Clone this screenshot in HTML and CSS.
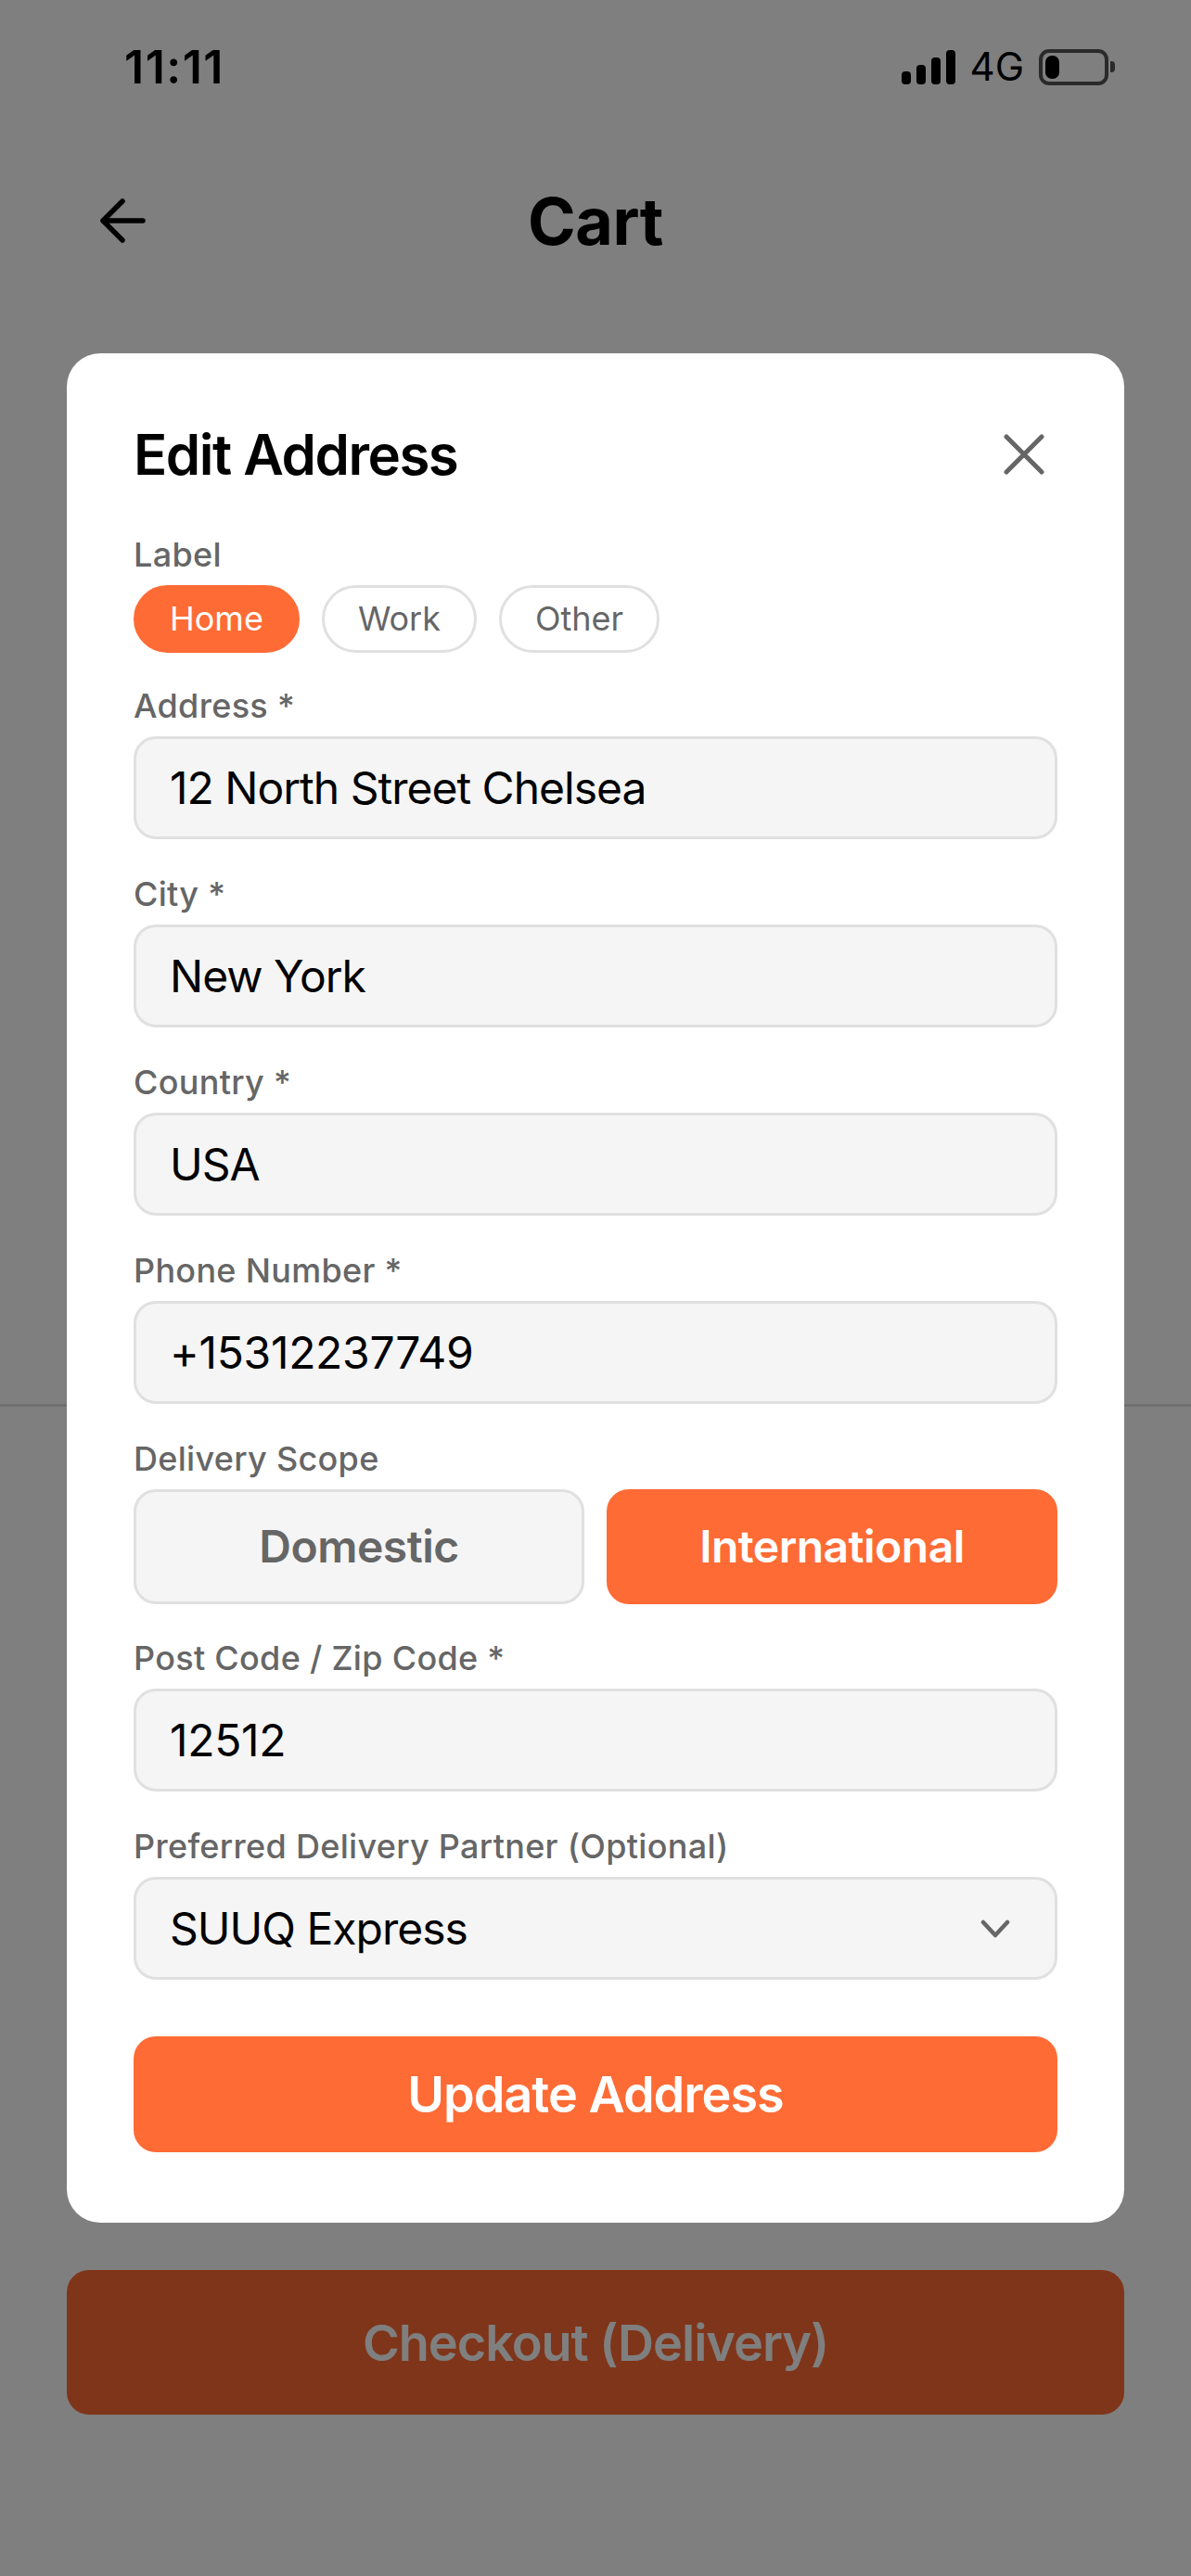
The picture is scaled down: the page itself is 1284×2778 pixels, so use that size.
FILE: index.html
```html
<!DOCTYPE html>
<html lang="en">

<head>
    <meta charset="UTF-8">
    <meta name="viewport" content="width=device-width, initial-scale=1.0">
    <title>Cart</title>
    <link rel="stylesheet" href="styles.css">
</head>

<body>

    <div class="screen">
        <div class="status-bar">
            <span class="time">11:11</span>
            <div class="status-icons">
                <div class="signal">
                    <span class="bar bar-1"></span>
                    <span class="bar bar-2"></span>
                    <span class="bar bar-3"></span>
                    <span class="bar bar-4"></span>
                </div>
                <span class="network">4G</span>
                <div class="battery">
                    <span class="battery-level"></span>
                </div>
                <span class="battery-cap"></span>
            </div>
        </div>

        <div class="cart-header">
            <svg class="back-icon" viewBox="0 0 52 52" fill="none" stroke="#000" stroke-width="5.5" stroke-linecap="round" stroke-linejoin="round">
                <path d="M48 26H5M26 5 5 26l21 21" />
            </svg>
            <h1>Cart</h1>
        </div>

        <div class="cart-footer">
            <button type="button" class="checkout-button">Checkout (Delivery)</button>
        </div>

        <!-- Address dialog -->
        <div class="overlay">
            <div class="modal">
                <div class="modal-header">
                    <h2>Edit Address</h2>
                    <svg class="close-icon" viewBox="0 0 46 46" fill="none" stroke="#666" stroke-width="5" stroke-linecap="round">
                        <path d="M4 4l38 38M42 4 4 42" />
                    </svg>
                </div>

                <div class="field-label">Label</div>
                <div class="chips">
                    <span class="chip active">Home</span>
                    <span class="chip">Work</span>
                    <span class="chip">Other</span>
                </div>

                <div class="field-label">Address *</div>
                <div class="input">12 North Street Chelsea</div>

                <div class="field-label">City *</div>
                <div class="input">New York</div>

                <div class="field-label">Country *</div>
                <div class="input">USA</div>

                <div class="field-label">Phone Number *</div>
                <div class="input number">+15312237749</div>

                <div class="field-label">Delivery Scope</div>
                <div class="scope">
                    <span class="scope-option">Domestic</span>
                    <span class="scope-option active">International</span>
                </div>

                <div class="field-label">Post Code / Zip Code *</div>
                <div class="input number">12512</div>

                <div class="field-label">Preferred Delivery Partner (Optional)</div>
                <div class="input select">
                    SUUQ Express
                    <svg class="chevron" viewBox="0 0 32 20" fill="none" stroke="#666" stroke-width="4.5" stroke-linecap="round" stroke-linejoin="round">
                        <path d="M3 3l13 14L29 3" />
                    </svg>
                </div>

                <button type="button" class="update-button">Update Address</button>
            </div>
        </div>
    </div>

</body>

</html>
```

FILE: styles.css
```css
* {
    box-sizing: border-box;
}

body {
    margin: 0;
    font-family: Inter, "Liberation Sans", sans-serif;
    background-color: #fff;
}

h1,
h2 {
    margin: 0;
}

.screen {
    position: relative;
    display: flex;
    flex-direction: column;
    width: 1284px;
    height: 2778px;
    overflow: hidden;
    background-color: #fff;
}

/* Status bar */
.status-bar {
    display: flex;
    align-items: center;
    justify-content: space-between;
    height: 144px;
    padding: 0 82px 0 134px;
    color: #000;
}

.time {
    font-size: 50px;
    font-weight: 600;
    letter-spacing: 1.5px;
}

.status-icons {
    display: flex;
    align-items: center;
}

.signal {
    display: flex;
    align-items: flex-end;
    gap: 6px;
    height: 37px;
    margin-right: 16px;
}

.bar {
    width: 10px;
    border-radius: 4px;
    background-color: #000;
}

.bar-1 {
    height: 14px;
}

.bar-2 {
    height: 21px;
}

.bar-3 {
    height: 29px;
}

.bar-4 {
    height: 37px;
}

.network {
    margin-right: 16px;
    font-size: 42px;
    line-height: 1;
}

.battery {
    width: 75px;
    height: 39px;
    padding: 3px 0 0 3px;
    border: 4px solid #555;
    border-radius: 11px;
}

.battery-level {
    display: block;
    width: 15px;
    height: 25px;
    border-radius: 7px;
    background-color: #000;
}

.battery-cap {
    width: 5px;
    height: 12px;
    margin-left: 2px;
    border-radius: 0 4px 4px 0;
    background-color: #555;
}

/* Page header */
.cart-header {
    display: flex;
    align-items: center;
    justify-content: center;
    position: relative;
    height: 188px;
}

.cart-header h1 {
    font-size: 70px;
    font-weight: 700;
    letter-spacing: -0.5px;
}

.back-icon {
    position: absolute;
    left: 106px;
    top: 68px;
    width: 52px;
    height: 52px;
}

/* Bottom of the cart */
.cart-footer {
    margin-top: auto;
    height: 1264px;
    padding: 931px 72px 0;
    border-top: 3px solid #e0e0e0;
}

.checkout-button,
.update-button {
    display: block;
    width: 100%;
    border: none;
    border-radius: 24px;
    background-color: #ff6b35;
    color: #fff;
    font-family: inherit;
    font-weight: 600;
    font-size: 54px;
    letter-spacing: -1px;
}

.checkout-button {
    height: 156px;
}

/* Dialog */
.overlay {
    position: absolute;
    inset: 0;
    display: flex;
    align-items: center;
    padding: 0 72px;
    background-color: rgba(0, 0, 0, 0.5);
}

.modal {
    width: 100%;
    padding: 72px 72px 76px;
    border-radius: 36px;
    background-color: #fff;
}

.modal-header {
    display: flex;
    align-items: center;
    justify-content: space-between;
    height: 74px;
    margin-bottom: 48px;
}

.modal-header h2 {
    font-size: 60px;
    font-weight: 600;
    letter-spacing: -1.5px;
    color: #000;
}

.close-icon {
    width: 46px;
    height: 46px;
    margin-right: 13px;
}

.field-label {
    height: 44px;
    margin-bottom: 12px;
    font-size: 36px;
    line-height: 46px;
    font-weight: 500;
    letter-spacing: 0.3px;
    color: #666;
}

.chips {
    display: flex;
    gap: 24px;
    margin-bottom: 34px;
}

.chip {
    padding: 12px 36px;
    border: 3px solid #e0e0e0;
    border-radius: 60px;
    font-size: 36px;
    line-height: 43px;
    color: #666;
}

.chip.active {
    border-color: #ff6b35;
    background-color: #ff6b35;
    color: #fff;
}

.input {
    display: flex;
    align-items: center;
    justify-content: space-between;
    height: 111px;
    margin-bottom: 36px;
    padding: 0 36px;
    border: 3px solid #e0e0e0;
    border-radius: 24px;
    background-color: #f5f5f5;
    font-size: 48px;
    letter-spacing: -1px;
    color: #000;
}

.input.number {
    letter-spacing: -0.3px;
}

.chevron {
    width: 32px;
    height: 20px;
    margin-right: 12px;
}

.scope {
    display: flex;
    gap: 24px;
    margin-bottom: 35px;
}

.scope-option {
    flex: 1;
    height: 124px;
    border: 3px solid #e0e0e0;
    border-radius: 24px;
    background-color: #f5f5f5;
    font-size: 48px;
    line-height: 118px;
    font-weight: 600;
    letter-spacing: -0.5px;
    text-align: center;
    color: #666;
}

.scope-option.active {
    border-color: #ff6b35;
    background-color: #ff6b35;
    color: #fff;
}

.update-button {
    height: 125px;
    margin-top: 61px;
}
```
